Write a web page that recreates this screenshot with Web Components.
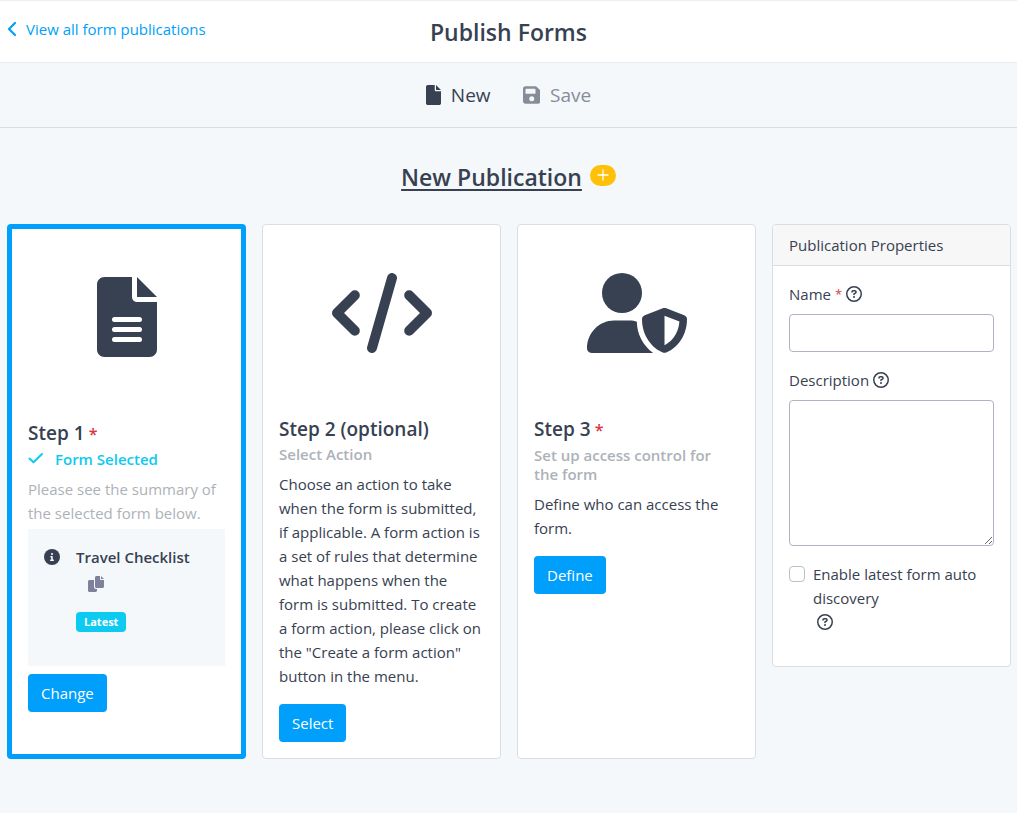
<!DOCTYPE html>
<html lang="en">
<head>
<meta charset="utf-8">
<meta name="viewport" content="width=device-width, initial-scale=1">
<title>Publish Forms</title>
<style>
  :root {
    --ink: #374151;
    --muted: #adb2b8;
    --primary: #009ffb;
    --info: #0dcaf0;
    --warning: #ffc107;
    --danger: #dc3545;
    --surface: #f4f8fb;
    --line: #dadee2;
    --field-line: #b4b1c4;
  }
  * { box-sizing: border-box; }
  body {
    margin: 0;
    min-height: 100vh;
    background: var(--surface);
    color: var(--ink);
    font: 15px/24px "Open Sans", "Noto Sans", sans-serif;
  }
</style>
</head>
<body>
<publish-page></publish-page>

<script>
const define = (name, html, setup) => {
  const template = document.createElement('template');
  template.innerHTML = '<style>*{box-sizing:border-box}[hidden]{display:none!important}</style>' + html;
  customElements.define(name, class extends HTMLElement {
    constructor() {
      super();
      this.attachShadow({ mode: 'open' }).append(template.content.cloneNode(true));
    }
    connectedCallback() { if (setup) setup(this, this.shadowRoot); }
  });
};

const ICONS = {
  back: ['0 0 10 16', '<path d="M8 2 2 8l6 6" fill="none" stroke="currentColor" stroke-width="2.2" stroke-linecap="round" stroke-linejoin="round"/>'],
  file: ['0 0 384 512', '<path d="M256 0v128h128L256 0zM224 128V0H48C21.5 0 0 21.5 0 48v416c0 26.5 21.5 48 48 48h288c26.5 0 48-21.5 48-48V160H256c-17.7 0-32-14.3-32-32z"/>'],
  lines: ['0 0 384 512', '<path fill-rule="evenodd" d="M256 0v128h128L256 0zM224 128V0H48C21.5 0 0 21.5 0 48v416c0 26.5 21.5 48 48 48h288c26.5 0 48-21.5 48-48V160H256c-17.7 0-32-14.3-32-32zM272 416H112a16 16 0 0 1 0-32h160a16 16 0 0 1 0 32zM272 352H112a16 16 0 0 1 0-32h160a16 16 0 0 1 0 32zM272 288H112a16 16 0 0 1 0-32h160a16 16 0 0 1 0 32z"/>'],
  save: ['0 0 448 512', '<path fill-rule="evenodd" d="M433.1 129.1l-83.9-83.9C342.3 38.3 327.1 32 316.1 32H64C28.7 32 0 60.7 0 96v320c0 35.3 28.7 64 64 64h320c35.3 0 64-28.7 64-64V163.9C448 152.9 441.7 137.7 433.1 129.1zM224 416a64 64 0 1 1 0-128 64 64 0 0 1 0 128zM320 208c0 8.8-7.2 16-16 16H80c-8.8 0-16-7.2-16-16v-96c0-8.8 7.2-16 16-16h224c8.8 0 16 7.2 16 16v96z"/>'],
  code: ['0 0 640 512', '<path d="M146 142 32 256l114 114M494 142l114 114-114 114M384 32 256 480" fill="none" stroke="currentColor" stroke-width="64" stroke-linecap="round" stroke-linejoin="round"/>'],
  shield: ['0 0 640 512', '<circle cx="224" cy="128" r="128"/><path d="M30 512C13 512 0 499 0 482 0 384 78 304 173 304h102c15 0 31 2 44 8 1 78 38 151 104 200z"/><path fill-rule="evenodd" d="M622.3 271.1l-115.1-45c-4.1-1.6-12.6-3.8-22.3 0L369.8 271.1C359 275.2 352 285.1 352 295.1c0 111.6 68.8 188.8 132.9 213.9 9.6 3.8 18 1.6 22.3 0C558.4 489.9 640 420.5 640 295.1 640 285.1 633 275.2 622.3 271.1zM496 462.4V273.2l95.5 37.4C585.9 397.8 530.6 446 496 462.4z"/>'],
  check: ['0 0 16 16', '<path d="M1.5 8.5 5.5 12.3 14 4" fill="none" stroke="currentColor" stroke-width="2" stroke-linecap="round" stroke-linejoin="round"/>'],
  info: ['0 0 512 512', '<circle cx="256" cy="256" r="256"/><g fill="#fff"><circle cx="256" cy="160" r="32"/><path d="M296 384h-80a24 24 0 0 1 0-48h16v-64h-8a24 24 0 0 1 0-48h32c13.3 0 24 10.8 24 24v88h16a24 24 0 0 1 0 48z"/></g>'],
  copy: ['0 0 512 512', '<path d="M384 96V0H272c-26.5 0-48 21.5-48 48v288c0 26.5 21.5 48 48 48h192c26.5 0 48-21.5 48-48V128h-96c-17.6 0-32-14.4-32-32zM416 0v96h96L416 0zM192 352V128H48c-26.5 0-48 21.5-48 48v288c0 26.5 21.5 48 48 48h192c26.5 0 48-21.5 48-48v-48h-32c-35.3 0-64-28.7-64-64z"/>'],
  help: ['0 0 512 512', '<g fill="none" stroke="currentColor" stroke-width="48" stroke-linecap="round"><circle cx="256" cy="256" r="232"/><path d="M192 188c0-24 16-36 36-36h52c24 0 42 17 42 40 0 15-8 28-20 35l-46 27v16"/></g><circle cx="256" cy="352" r="32"/>'],
  plus: ['0 0 12 12', '<path d="M6 1v10M1 6h10" fill="none" stroke="currentColor" stroke-width="1.3" stroke-linecap="round"/>']
};

define('ui-icon', `
  <style>
    :host { display: inline-flex; flex: none; height: 16px; }
    svg { display: block; height: 100%; width: auto; fill: currentColor; }
  </style>
  <svg aria-hidden="true"></svg>`, (el, root) => {
  const [box, body] = ICONS[el.getAttribute('name')];
  const svg = root.querySelector('svg');
  svg.setAttribute('viewBox', box);
  svg.innerHTML = body;
});

define('ui-button', `
  <style>
    :host { display: inline-block; }
    button {
      display: block; height: 38px; padding: 0 13px; border: 0; border-radius: 4px;
      background: var(--primary); color: #fff; font: inherit; cursor: pointer;
    }
  </style>
  <button type="button"><slot></slot></button>`);

define('page-header', `
  <style>
    :host {
      display: grid; grid-template-columns: 1fr auto 1fr; align-items: start;
      min-height: 63px; padding: 16px 7px 8px; background: #fff;
      border-top: 1px solid #ebeff3; border-bottom: 1px solid #e6ebef;
    }
    a { display: inline-flex; align-items: center; gap: 9px; color: var(--primary); text-decoration: none; }
    h1 { margin: 0; font-size: 23px; line-height: 30px; font-weight: 600; }
  </style>
  <nav><a href="#"><ui-icon name="back"></ui-icon>View all form publications</a></nav>
  <h1><slot></slot></h1>`);

define('page-toolbar', `
  <style>
    :host {
      display: flex; justify-content: center; gap: 32px; padding: 17px 16px;
      border-bottom: 1px solid var(--line);
    }
    button {
      display: flex; align-items: center; gap: 10px; padding: 0; border: 0; background: none;
      color: var(--ink); font: inherit; font-size: 19px; line-height: 30px;
    }
    button:disabled { color: #878d98; }
    ui-icon { height: 20px; }
  </style>
  <button type="button"><ui-icon name="file"></ui-icon>New</button>
  <button type="button" disabled><ui-icon name="save"></ui-icon>Save</button>`);

define('publication-title', `
  <style>
    :host { display: flex; justify-content: center; align-items: center; gap: 8px; padding: 33px 16px 31px; }
    h2 {
      margin: 0; font-size: 23px; line-height: 32px; font-weight: 600;
      text-decoration: underline; text-decoration-thickness: 2px; text-underline-offset: 3px;
    }
    button {
      display: flex; align-items: center; justify-content: center; width: 26px; height: 21px;
      margin-bottom: 4px; padding: 0; border: 0; border-radius: 11px; background: var(--warning); color: #fff;
    }
    ui-icon { height: 12px; }
  </style>
  <h2><slot></slot></h2>
  <button type="button" aria-label="New"><ui-icon name="plus"></ui-icon></button>`);

define('step-card', `
  <style>
    :host {
      display: block; padding: 16px; background: #fff;
      border: 1px solid var(--line); border-radius: 4px;
    }
    :host([selected]) { border: 5px solid var(--primary); }
    .art { display: flex; justify-content: center; padding: 32px 0 64px; }
    .art ui-icon { height: 80px; }
    h3 { margin: 0 0 4px; font-size: 19px; line-height: 24px; font-weight: 600; }
    h3 .req { color: var(--danger); font-size: 16px; }
    h4 {
      display: flex; gap: 11px; margin: 0 0 8px; color: var(--muted);
      font-size: 15px; line-height: 19px; font-weight: 600;
    }
    :host([selected]) h4 { color: var(--info); }
    p { margin: 0 0 16px; }
    :host([selected]) p { margin: 0 0 4px; color: var(--muted); }
  </style>
  <div class="art"></div>
  <h3><slot name="title"></slot><span class="req"> *</span></h3>
  <h4><ui-icon class="tick" name="check"></ui-icon><slot name="status"></slot></h4>
  <p><slot></slot></p>
  <slot name="summary"></slot>
  <slot name="action"></slot>`, (el, root) => {
  const icon = document.createElement('ui-icon');
  icon.setAttribute('name', el.getAttribute('icon'));
  root.querySelector('.art').replaceChildren(icon);
  if (!el.hasAttribute('required')) root.querySelector('.req')?.remove();
  if (!el.hasAttribute('selected')) root.querySelector('.tick')?.remove();
});

define('form-summary', `
  <style>
    :host {
      display: flex; gap: 16px; margin: 0 0 8px; padding: 16px 16px 34px;
      background: var(--surface);
    }
    .info { margin-top: 4px; }
    .details { display: flex; flex-direction: column; align-items: flex-start; }
    strong { font-weight: 600; font-size: 15px; }
    button { display: flex; margin: 7px 12px 20px; padding: 0; border: 0; background: none; color: #7f819a; }
    .badge {
      padding: 0 8px; border-radius: 4px; background: var(--info); color: #fff;
      font-size: 11px; line-height: 20px; font-weight: 700;
    }
  </style>
  <ui-icon class="info" name="info"></ui-icon>
  <div class="details">
    <strong><slot></slot></strong>
    <button type="button" aria-label="Copy"><ui-icon name="copy"></ui-icon></button>
    <span class="badge"><slot name="badge"></slot></span>
  </div>`);

define('text-field', `
  <style>
    :host { display: block; margin-bottom: 16px; }
    .head { display: flex; align-items: center; gap: 4px; margin-bottom: 8px; }
    .req { color: var(--danger); font-size: 13px; }
    input, textarea {
      display: block; width: 100%; height: 38px; margin: 0; padding: 6px 12px; background: #fff;
      border: 1px solid var(--field-line); border-radius: 4px; color: inherit; font: inherit;
    }
    textarea { height: 146px; resize: vertical; }
  </style>
  <div class="head"><label for="control"><slot></slot></label><span class="req">*</span><ui-icon name="help"></ui-icon></div>
  <input id="control" type="text">`, (el, root) => {
  if (!el.hasAttribute('required')) root.querySelector('.req')?.remove();
  if (el.hasAttribute('multiline')) {
    const area = document.createElement('textarea');
    area.id = 'control';
    root.querySelector('#control').replaceWith(area);
  }
});

define('check-field', `
  <style>
    :host { display: grid; grid-template-columns: 16px 1fr; column-gap: 8px; }
    input {
      appearance: none; width: 16px; height: 16px; margin: 4px 0 0;
      border: 1px solid #bfbfbf; border-radius: 4px; background: #fff;
    }
    input:checked { background: var(--primary); }
    ui-icon { grid-column: 2; margin: 4px; }
  </style>
  <input id="control" type="checkbox">
  <label for="control"><slot></slot></label>
  <ui-icon name="help"></ui-icon>`);

define('properties-panel', `
  <style>
    :host {
      display: block; background: #fff;
      border: 1px solid var(--line); border-radius: 4px; overflow: hidden;
    }
    header { padding: 8px 16px; background: #f7f7f7; border-bottom: 1px solid var(--line); }
    form { padding: 16px 16px 32px; }
  </style>
  <header><slot name="title"></slot></header>
  <form><slot></slot></form>`);

define('publish-page', `
  <style>
    :host { display: block; }
    main {
      display: grid; grid-template-columns: repeat(4, minmax(0, 1fr)); gap: 16px;
      padding: 0 6px 32px 7px;
    }
    properties-panel { align-self: start; }
  </style>
  <page-header>Publish Forms</page-header>
  <page-toolbar></page-toolbar>
  <publication-title>New Publication</publication-title>
  <main>
    <step-card icon="lines" selected required>
      <span slot="title">Step 1</span>
      <span slot="status">Form Selected</span>
      Please see the summary of the selected form below.
      <form-summary slot="summary">Travel Checklist<span slot="badge">Latest</span></form-summary>
      <ui-button slot="action">Change</ui-button>
    </step-card>
    <step-card icon="code">
      <span slot="title">Step 2 (optional)</span>
      <span slot="status">Select Action</span>
      Choose an action to take when the form is submitted, if applicable. A form action is a set of rules that determine what happens when the form is submitted. To create a form action, please click on the "Create a form action" button in the menu.
      <ui-button slot="action">Select</ui-button>
    </step-card>
    <step-card icon="shield" required>
      <span slot="title">Step 3</span>
      <span slot="status">Set up access control for the form</span>
      Define who can access the form.
      <ui-button slot="action">Define</ui-button>
    </step-card>
    <properties-panel>
      <span slot="title">Publication Properties</span>
      <text-field required>Name</text-field>
      <text-field multiline>Description</text-field>
      <check-field>Enable latest form auto discovery</check-field>
    </properties-panel>
  </main>`);
</script>
</body>
</html>
